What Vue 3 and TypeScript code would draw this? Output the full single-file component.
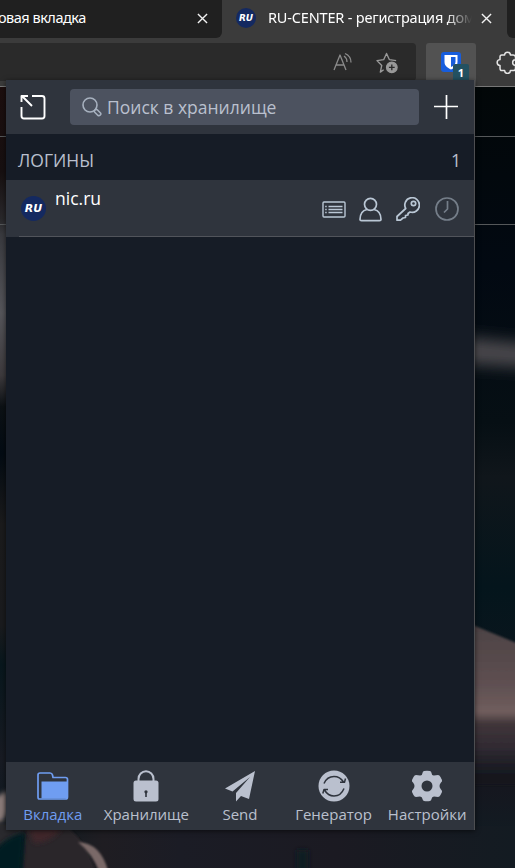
<script setup lang="ts">
type IconName = 'tab' | 'vault' | 'send' | 'generator' | 'settings'

interface NavItem {
  id: IconName
  label: string
}

const activeTab: IconName = 'tab'
const navItems: NavItem[] = [
  { id: 'tab', label: 'Вкладка' },
  { id: 'vault', label: 'Хранилище' },
  { id: 'send', label: 'Send' },
  { id: 'generator', label: 'Генератор' },
  { id: 'settings', label: 'Настройки' },
]
const logins = [{ name: 'nic.ru', badge: 'RU' }]
</script>

<template>
  <div class="window">
    <header class="tabs">
      <div class="tab tab-back">
        <span class="tab-title back-title">овая вкладка</span>
        <svg class="close" viewBox="0 0 12 12"><path d="M1 1 11 11M11 1 1 11" /></svg>
      </div>
      <div class="tab-front">
        <span class="favicon small">RU</span>
        <span class="tab-title front-title">RU-CENTER - регистрация дом</span>
        <svg class="close" viewBox="0 0 12 12"><path d="M1 1 11 11M11 1 1 11" /></svg>
      </div>
      <div class="tab tab-next"></div>
    </header>
    <div class="toolbar">
      <div class="address">
        <svg class="read" viewBox="0 0 20 20">
          <path d="M1 18 7 3 13 18M3 13H11M11 4Q14 6 14 10M12 1.5Q18 4 18 10.500" />
        </svg>
        <svg class="star" viewBox="0 0 24 24">
          <path d="M8 18.500 4.500 21 6 14 1 9 8 8 11 1.500 14 8 21 9" />
          <circle cx="16.500" cy="16" r="5.500" />
          <path class="star-plus" d="M13.500 16H19.500M16.500 13V19" />
        </svg>
      </div>
      <div class="extension">
        <svg viewBox="0 0 20 20">
          <rect width="20" height="20" rx="3" fill="#175ddc" />
          <path d="M3.500 3H16.500V10C16.500 14 13 16 10 17.500 7 16 3.500 14 3.500 10Z" fill="#fff" />
          <path d="M10 5H14.500V10C14.500 12.500 12 14 10 15Z" fill="#175ddc" />
        </svg>
        <span class="count-badge">1</span>
      </div>
      <svg class="puzzle" viewBox="0 0 20 20">
        <path d="M5 3.500H7.500A2.500 2.500 0 0 1 12.500 3.500H15Q17 3.500 17 5.500V7.500A2.500 2.500 0 0 0 17 12.500V15Q17 17 15 17H12.500A2.500 2.500 0 0 1 7.500 17H5Q3.500 17 3.500 15V12.500A2.500 2.500 0 0 1 3.500 7.500V5Q3.500 3.500 5 3.500Z" />
      </svg>
    </div>

    <main class="page">
      <svg class="backdrop" viewBox="0 86 515 782" preserveAspectRatio="none">
        <defs>
          <linearGradient id="leftTone" x1="0" y1="86" x2="0" y2="868" gradientUnits="userSpaceOnUse">
            <stop offset="0" stop-color="#1c0e0e" />
            <stop offset=".11" stop-color="#171011" />
            <stop offset=".17" stop-color="#29282b" />
            <stop offset=".19" stop-color="#393a3f" />
            <stop offset=".29" stop-color="#55555a" />
            <stop offset=".37" stop-color="#3d3a3d" />
            <stop offset=".41" stop-color="#0c1115" />
            <stop offset=".47" stop-color="#030b13" />
            <stop offset=".56" stop-color="#1b1b1c" />
            <stop offset=".69" stop-color="#1a1b1e" />
            <stop offset=".74" stop-color="#08171d" />
            <stop offset=".86" stop-color="#181b23" />
            <stop offset="1" stop-color="#071920" />
          </linearGradient>
          <linearGradient id="rightTone" x1="0" y1="86" x2="0" y2="868" gradientUnits="userSpaceOnUse">
            <stop offset="0" stop-color="#020708" />
            <stop offset=".23" stop-color="#020912" />
            <stop offset=".43" stop-color="#060f14" />
            <stop offset=".5" stop-color="#10161b" />
            <stop offset=".64" stop-color="#04151c" />
            <stop offset=".9" stop-color="#15171f" />
            <stop offset=".97" stop-color="#111c23" />
            <stop offset="1" stop-color="#161620" />
          </linearGradient>
          <linearGradient id="skin" x1="0" y1="625" x2="0" y2="775" gradientUnits="userSpaceOnUse">
            <stop offset="0" stop-color="#4c4244" />
            <stop offset=".4" stop-color="#5f5052" />
            <stop offset=".58" stop-color="#705e5d" />
            <stop offset=".66" stop-color="#40353a" />
            <stop offset=".82" stop-color="#302a32" />
            <stop offset="1" stop-color="#15181f" />
          </linearGradient>
          <linearGradient id="bottomTone">
            <stop offset="0" stop-color="#071b21" />
            <stop offset=".2" stop-color="#1f1d22" />
            <stop offset=".35" stop-color="#1b1c25" />
            <stop offset=".65" stop-color="#1b1a22" />
            <stop offset="1" stop-color="#131b22" />
          </linearGradient>
          <filter id="soft" x="-50%" y="-50%" width="200%" height="200%"><feGaussianBlur stdDeviation="2.500" /></filter>
          <filter id="edge" x="-20%" y="-20%" width="140%" height="140%"><feGaussianBlur stdDeviation="1.200" /></filter>
          <filter id="haze" x="-50%" y="-200%" width="200%" height="500%"><feGaussianBlur stdDeviation="8" /></filter>
        </defs>
        <rect y="86" width="240" height="782" fill="url(#leftTone)" />
        <rect x="240" y="86" width="275" height="782" fill="url(#rightTone)" />
        <rect y="826" width="515" height="42" fill="url(#bottomTone)" />
        <path d="M440 335 540 345V368L440 362Z" fill="#4b484e" filter="url(#haze)" />
        <path d="M455 618 475 626 560 661V785H455Z" fill="url(#skin)" filter="url(#edge)" />
        <path d="M-10 800 7 791V812Q2 828-10 828Z" fill="#8a7a78" filter="url(#soft)" />
        <path d="M-8 822H36L18 838-8 852Z" fill="#2c292d" filter="url(#soft)" />
        <path d="M26 826H66Q88 842 98 880H22Z" fill="#2b2529" filter="url(#edge)" />
        <path d="M28 828H62Q50 843 34 843Z" fill="#40262c" filter="url(#soft)" />
        <path d="M78 842Q104 843 110 880H102Q96 857 78 842Z" fill="#7a6968" filter="url(#edge)" />
        <path d="M-5 850Q10 834 24 833L21 880H-5Z" fill="#041a20" filter="url(#soft)" />
        <path d="M297 850H308V872H297Z" fill="#0b1e24" filter="url(#soft)" />
        <path d="M0 86.500H515" stroke="#777" />
        <path d="M0 136.500H515M0 224.500H515" stroke="#55585a" />
      </svg>
    </main>

    <section class="popup">
      <header class="popup-header">
        <svg class="popout" viewBox="0 0 26 26">
          <path d="M12 2H22Q24.500 2 24.500 4.500V22Q24.500 24.500 22 24.500H4Q1.500 24.500 1.500 22V13M12 12 2 2M1.500 8V2H8" />
        </svg>
        <div class="search">
          <svg viewBox="0 0 20 20">
            <circle cx="8" cy="8" r="7" />
            <path d="M12.500 13.500 13.500 12.500Q14.500 12 15.500 13L18.500 16Q19.300 17 18.300 18T16 18.500L13 15.500Q12 14.500 12.500 13.500Z" />
          </svg>
          <span>Поиск в хранилище</span>
        </div>
        <svg class="add" viewBox="0 0 24 24"><path d="M0 11.500H24M12.500 0V24" /></svg>
      </header>

      <div class="group-title"><span>ЛОГИНЫ</span><span>{{ logins.length }}</span></div>
      <div v-for="login in logins" :key="login.name" class="login">
        <span class="favicon">{{ login.badge }}</span>
        <span class="login-name">{{ login.name }}</span>
        <div class="actions">
          <svg class="card" viewBox="0 0 24 17">
            <rect x="1" y="1" width="22" height="15" rx="1" />
            <path d="M6.500 5.500H20.500M6.500 8.500H20.500M6.500 11.500H20.500M3.200 5.500H4.700M3.200 8.500H4.700M3.200 11.500H4.700" />
          </svg>
          <svg class="person" viewBox="0 0 23 25">
            <circle cx="11.500" cy="7.300" r="6" />
            <path d="M8 12.500Q1 14 1 22.500Q1 23.700 2.500 23.700H20.500Q22 23.700 22 22.500Q22 14 15 12.500" />
          </svg>
          <svg class="key" viewBox="0 0 24 24">
            <path d="M9.700 11.500A7.300 7.300 0 1 1 14 15L12 16.500V18L9.500 18.500V20.500L7 21 4.500 23.200H1V19.500Z" />
            <circle cx="17.500" cy="6.500" r="2.200" />
          </svg>
          <svg class="clock" viewBox="0 0 24 24">
            <circle cx="12" cy="12" r="11" />
            <path d="M12.500 4V12L9 15.500" />
          </svg>
        </div>
      </div>
      <div class="empty"></div>

      <nav class="nav">
        <div v-for="item in navItems" :key="item.id" class="nav-item" :class="{ active: item.id === activeTab }">
          <svg v-if="item.id === 'tab'" viewBox="0 0 32 32">
            <path d="M2.500 29Q1 29 1 27V5Q1 3 3 3H13Q15 3 15.500 5L16 7.500H28.500Q30.500 7.500 30.500 9.500V27Q30.500 29 28.500 29Z" fill="none" stroke="currentColor" stroke-width="1.700" />
            <path d="M4.500 11.500H30V28.500H4.500Z" fill="currentColor" />
          </svg>
          <svg v-else-if="item.id === 'vault'" viewBox="0 0 32 32">
            <path d="M8.500 13V9A7.300 7.500 0 0 1 23.500 9V13" fill="none" stroke="currentColor" stroke-width="2" />
            <rect x="3.500" y="10.500" width="25" height="21" rx="2.500" fill="currentColor" />
            <path d="M14.300 22A1.700 1.700 0 1 1 17.700 22L16.800 23.500V27H15.200V23.500Z" class="cutout" />
          </svg>
          <svg v-else-if="item.id === 'send'" viewBox="0 0 32 32">
            <path d="M31 1 1 18.500 8.500 21.500 26 7 12 23V31.500L17 26 25 29Z" fill="currentColor" />
          </svg>
          <svg v-else-if="item.id === 'generator'" viewBox="0 0 32 32">
            <circle cx="16" cy="16" r="15.500" fill="currentColor" />
            <path d="M6 13.500Q9 6.500 16 6.500Q22 6.500 25.500 12M26 18.500Q23 26 16 26Q10 26 6.500 20M22 12.200H26.500L27.500 8.500M10 19.500H6L4.800 23.500" fill="none" stroke="#2f343d" stroke-width="1.500" />
          </svg>
          <svg v-else viewBox="0 0 32 32">
            <path d="M13 1Q16 .3 19 1Q20.400 1.300 20.500 3Q20.800 5.700 23 5.500L27 5Q28.500 5 29.500 7L31 10Q31.400 11.500 30 12.500Q27 16 30 19.500Q31.400 20.500 31 22L29.500 25Q28.500 27 27 27L23 26.500Q20.800 26.500 20.500 29Q20.400 30.700 19 31Q16 31.700 13 31Q11.600 30.700 11.500 29Q11.200 26.500 9 26.500L5 27Q3.500 27 2.500 25L1 22Q.6 20.500 2 19.500Q5 16 2 12.500Q.6 11.500 1 10L2.500 7Q3.500 5 5 5L9 5.500Q11.200 5.700 11.500 3Q11.600 1.300 13 1Z" fill="currentColor" />
            <circle cx="16" cy="16" r="5.500" class="cutout" />
          </svg>
          <span>{{ item.label }}</span>
        </div>
      </nav>
    </section>
  </div>
</template>

<style>
body {
  background: #3b3b3b;
}
</style>

<style scoped>
* {
  box-sizing: border-box;
}
svg {
  display: block;
  flex: none;
  fill: none;
  stroke-linejoin: round;
}
.window {
  position: relative;
  width: 515px;
  height: 868px;
  overflow: hidden;
  background: #3b3b3b;
  font-family: "Open Sans", "Noto Sans", sans-serif;
}
.tabs {
  display: flex;
  height: 38px;
}
.tab {
  height: 38px;
  background: #202020;
}
.tab-back {
  display: flex;
  align-items: center;
  justify-content: space-between;
  width: 222px;
  padding: 0 14px 2px 0;
  border-radius: 0 0 6px 0;
}
.tab-front {
  display: flex;
  align-items: center;
  width: 285px;
  padding: 0 0 2px 14px;
}
.tab-next {
  width: 8px;
  border-radius: 0 0 0 6px;
}
.tab-title {
  color: #fff;
  font: 14.500px/20px "Noto Sans", "Open Sans", sans-serif;
  white-space: nowrap;
}
.back-title {
  margin: -2px 0 0 -2px;
  letter-spacing: -0.5px;
}
.front-title {
  flex: none;
  width: 212px;
  margin: -2px 1px 0 12px;
  letter-spacing: -0.17px;
  mask-image: linear-gradient(to right, #000 178px, transparent 204px);
}
.close {
  width: 11px;
  height: 11px;
  stroke: #f2f2f2;
  stroke-width: 1.500;
}
.favicon {
  display: flex;
  flex: none;
  align-items: center;
  justify-content: center;
  width: 25px;
  height: 25px;
  border-radius: 50%;
  background: #142960;
  color: #fff;
  font: italic 700 11px/1 "DejaVu Sans", sans-serif;
}
.favicon.small {
  width: 20px;
  height: 20px;
  font-size: 9px;
}
.toolbar {
  display: flex;
  height: 48px;
  padding-top: 5px;
}
.address {
  display: flex;
  flex: none;
  justify-content: flex-end;
  width: 416px;
  height: 38px;
  padding: 9px 17px 0 0;
  border-radius: 0 4px 4px 0;
  background: #2a2a2a;
}
.read {
  width: 20px;
  height: 20px;
  margin-right: 23px;
  stroke: #8b8b8b;
  stroke-width: 1.300;
}
.star {
  width: 23px;
  height: 23px;
  stroke: #999;
  stroke-width: 1.400;
}
.star circle {
  fill: #999;
}
.star .star-plus {
  stroke: #2a2a2a;
}
.extension {
  position: relative;
  flex: none;
  width: 50px;
  height: 43px;
  margin-left: 10px;
  padding: 9px 15px;
  border-radius: 3px 3px 0 0;
  background: #525252;
}
.extension svg {
  width: 20px;
  height: 20px;
}
.count-badge {
  position: absolute;
  top: 21px;
  left: 27px;
  width: 16px;
  height: 18px;
  border-radius: 2px;
  background: #235161;
  color: #fff;
  font: 700 11px/18px "Open Sans", sans-serif;
  text-align: center;
}
.puzzle {
  width: 23px;
  height: 23px;
  margin: 8px 0 0 20px;
  stroke: #e5e5e5;
  stroke-width: 1.300;
}
.page {
  height: 782px;
}
.backdrop {
  width: 515px;
  height: 782px;
}
.popup {
  position: absolute;
  top: 80px;
  left: 6px;
  display: flex;
  flex-direction: column;
  width: 469px;
  height: 750px;
  border-right: 1px solid #4d4e51;
  background: #161c26;
  box-shadow: 0 1px 5px rgba(0, 0, 0, 0.6);
}
.popup-header {
  display: flex;
  align-items: center;
  height: 54px;
  padding: 0 15px 0 14px;
  background: #2f343d;
}
.popout {
  width: 26px;
  height: 26px;
  margin-right: 24px;
  stroke: #fff;
  stroke-width: 1.900;
}
.search {
  display: flex;
  align-items: center;
  width: 349px;
  height: 36px;
  padding-left: 12px;
  border-radius: 4px;
  background: #4c525f;
  color: #bac0ce;
  font-size: 17.500px;
  line-height: 24px;
  white-space: nowrap;
}
.search span {
  margin-left: -1px;
}
.search svg {
  width: 20px;
  height: 20px;
  margin-right: 6px;
  stroke: #a7b1bf;
  stroke-width: 1.600;
}
.add {
  width: 24px;
  height: 24px;
  margin-left: 15px;
  stroke: #fff;
  stroke-width: 1.700;
}
.group-title {
  display: flex;
  justify-content: space-between;
  height: 46px;
  padding: 14px 13px 0 12px;
  color: #bac0ce;
  font-size: 17.500px;
  line-height: 24px;
}
.login {
  display: flex;
  align-items: center;
  height: 57px;
  padding: 0 15px;
  background: linear-gradient(#51545b, #51545b) 13px 56px / 455px 1px no-repeat, #2f343d;
}
.login-name {
  margin: -22px 0 0 9px;
  color: #fff;
  font-size: 17.500px;
  line-height: 24px;
}
.actions {
  display: flex;
  align-items: center;
  margin-left: auto;
  padding-top: 1px;
  color: #bac7d5;
}
.actions svg {
  stroke: currentColor;
  stroke-width: 1.700;
}
.actions .card {
  width: 24px;
  height: 17px;
  margin-right: 13px;
  stroke-width: 1.400;
}
.person {
  width: 23px;
  height: 25px;
  margin-right: 14px;
}
.key {
  width: 24px;
  height: 24px;
  margin-right: 15px;
}
.clock {
  width: 24px;
  height: 24px;
  opacity: 0.5;
}
.empty {
  flex: 1;
}
.nav {
  display: grid;
  grid-template-columns: repeat(5, 1fr);
  height: 68px;
  background: #2f343d;
}
.nav-item {
  display: flex;
  flex-direction: column;
  align-items: center;
  padding-top: 8px;
  color: #bac0ce;
  font-size: 15px;
  line-height: 20px;
  white-space: nowrap;
}
.nav-item svg {
  width: 32px;
  height: 32px;
  margin-bottom: 2px;
}
.nav-item.active {
  color: #6f9df1;
}
.cutout {
  fill: #2f343d;
}
</style>
